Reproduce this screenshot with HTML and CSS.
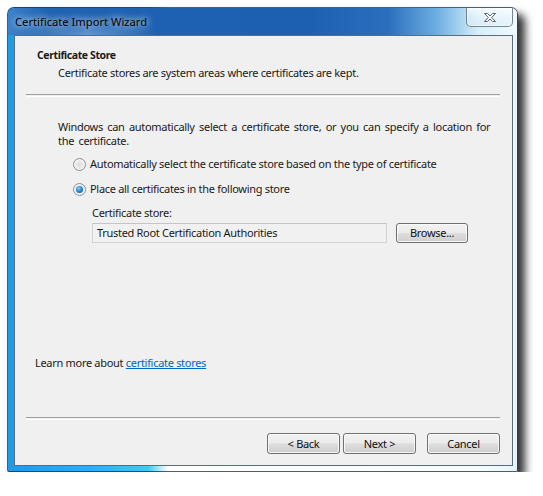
FILE: index.html
```html
<!DOCTYPE html>
<html>
<head>
<meta charset="utf-8">
<link rel="stylesheet" href="styles.css">
</head>
<body>
<div class="window">
  <div class="titlebar">
    <span class="title">Certificate Import Wizard</span>
    <div class="close">
      <svg width="14" height="11" viewBox="0 0 14 11">
        <path d="M1.5 1.5 L4.5 1.5 L7 4 L9.5 1.5 L12.5 1.5 L8.7 5.5 L12.5 9.5 L9.5 9.5 L7 7 L4.5 9.5 L1.5 9.5 L5.3 5.5 Z" fill="#fff" stroke="#5a6470" stroke-width="1" stroke-linejoin="round"/>
      </svg>
    </div>
  </div>
  <div class="client">
    <div class="header">
      <div class="h-title">Certificate Store</div>
      <div class="h-sub">Certificate stores are system areas where certificates are kept.</div>
    </div>
    <div class="sep"></div>
    <div class="content">
      <p class="intro">Windows can automatically select a certificate store, or you can specify a location for<br>the certificate.</p>
      <div class="radio"><span class="rb"></span><span>Automatically select the certificate store based on the type of certificate</span></div>
      <div class="radio second"><span class="rb checked"></span><span>Place all certificates in the following store</span></div>
      <div class="store">
        <div class="store-label">Certificate store:</div>
        <div class="store-row">
          <div class="textbox">Trusted Root Certification Authorities</div>
          <div class="btn browse">Browse...</div>
        </div>
      </div>
    </div>
    <div class="learn">Learn more about <a class="link" href="#">certificate stores</a></div>
    <div class="sep"></div>
    <div class="buttons">
      <div class="btn">&lt; Back</div>
      <div class="btn next">Next &gt;</div>
      <div class="btn cancel">Cancel</div>
    </div>
  </div>
</div>
</body>
</html>
```

FILE: styles.css
```css
html, body {
  margin: 0;
  padding: 0;
  background: #ffffff;
}
body {
  font-family: "Noto Sans", "Open Sans", sans-serif;
  font-size: 11px;
  letter-spacing: -0.3px;
  color: #1a1a1a;
}
.window {
  margin: 7px 0 0 7px;
  width: 511px;
  height: 465px;
  box-sizing: border-box;
  border: 1px solid rgba(20, 40, 70, 0.75);
  border-radius: 7px 7px 2px 2px;
  padding: 0 4px 5px 6px;
  display: flex;
  flex-direction: column;
  background: linear-gradient(to right, #1f9ae6 0px, #2eb2f2 90px, #45c6f8 140px, #ffffff 160px, #f6fcff 470px, #e4f4fb 511px);
  box-shadow: 7px 7px 9px rgba(0, 0, 0, 0.8);
}
.titlebar {
  height: 27px;
  margin: 0 -4px 0 -6px;
  padding: 0 4px 0 7px;
  display: flex;
  align-items: flex-start;
  border-radius: 6px 6px 0 0;
  background:
    radial-gradient(ellipse 70px 10px at 80px 26px, rgba(140, 190, 240, 0.55), rgba(140, 190, 240, 0) 100%),
    linear-gradient(to right, #3d82cc 0px, #1f62b4 40px, #1d60b2 300px, #2a6fbe 380px, #6fb0e2 430px, #d6effa 470px, #f0fbff 511px);
}
.title {
  margin-top: 6px;
  font-size: 11.2px;
  letter-spacing: 0;
  line-height: 16px;
  color: #000;
  text-shadow: 0 0 6px rgba(255, 255, 255, 0.9), 0 0 10px rgba(255, 255, 255, 0.7);
}
.close {
  margin-left: auto;
  width: 47px;
  height: 19px;
  box-sizing: border-box;
  border: 1px solid rgba(60, 70, 80, 0.65);
  border-top: none;
  border-radius: 0 0 5px 5px;
  background: linear-gradient(to bottom, rgba(255, 255, 255, 0.7), rgba(235, 245, 250, 0.55) 50%, rgba(220, 235, 245, 0.5));
  box-shadow: inset 0 0 0 1px rgba(255, 255, 255, 0.5);
  display: flex;
  align-items: center;
  justify-content: center;
}
.client {
  flex: 1;
  background: #f0f0f0;
  border: 1px solid #5d6c7c;
  display: flex;
  flex-direction: column;
  line-height: 14px;
}
.header {
  padding: 12px 0 0 22px;
}
.h-title {
  font-weight: bold;
  font-size: 10.5px;
  letter-spacing: -0.4px;
}
.h-sub {
  margin: 4px 0 0 21px;
}
.sep {
  margin: 14px 12px 0 11px;
  height: 1px;
  border-top: 1px solid #a0a0a0;
  border-bottom: 1px solid #ffffff;
}
.content {
  padding-left: 43px;
}
.intro {
  margin: 23px 0 0 0;
  white-space: nowrap;
  word-spacing: 1.8px;
}
.radio {
  margin: 8px 0 0 15px;
  height: 16px;
  display: flex;
  align-items: center;
  gap: 4px;
  white-space: nowrap;
}
.radio.second {
  margin-top: 9px;
}
.rb {
  width: 13px;
  height: 13px;
  box-sizing: border-box;
  border-radius: 50%;
  border: 1px solid #8c8e90;
  background: radial-gradient(circle at 50% 50%, #dcdcdc 0%, #eaeaea 45%, #f7f7f7 100%);
  box-shadow: inset 0 0 0 1px #f4f4f4;
  display: flex;
  align-items: center;
  justify-content: center;
}
.rb.checked::after {
  content: "";
  width: 7px;
  height: 7px;
  border-radius: 50%;
  background: radial-gradient(circle at 40% 35%, #8fd3fb 0%, #2c8ad4 45%, #0c4f8e 100%);
}
.store {
  margin: 9px 0 0 34px;
}
.store-row {
  margin-top: 3px;
  display: flex;
  gap: 9px;
}
.textbox {
  width: 295px;
  height: 20px;
  box-sizing: border-box;
  border: 1px solid #d2d2d2;
  border-top-color: #c4c4c4;
  background: #f1f1f1;
  padding: 2px 0 0 4px;
  line-height: 14px;
}
.btn {
  width: 72px;
  height: 21px;
  box-sizing: border-box;
  border: 1px solid #707070;
  border-radius: 3px;
  background: linear-gradient(to bottom, #f2f2f2 0%, #ebebeb 48%, #dddddd 52%, #cfcfcf 100%);
  box-shadow: inset 0 0 0 1px rgba(252, 252, 252, 0.85);
  display: flex;
  align-items: center;
  justify-content: center;
  color: #111;
}
.browse {
  height: 20px;
}
.learn {
  margin: auto 0 33px 20px;
}
.link {
  color: #0066cc;
  text-decoration: underline;
}
.buttons {
  display: flex;
  justify-content: flex-end;
  padding: 13px 12px 11px 0;
}
.buttons .btn {
  width: 73px;
}
.buttons .next {
  margin-left: 3px;
}
.buttons .cancel {
  margin-left: 11px;
}
```
